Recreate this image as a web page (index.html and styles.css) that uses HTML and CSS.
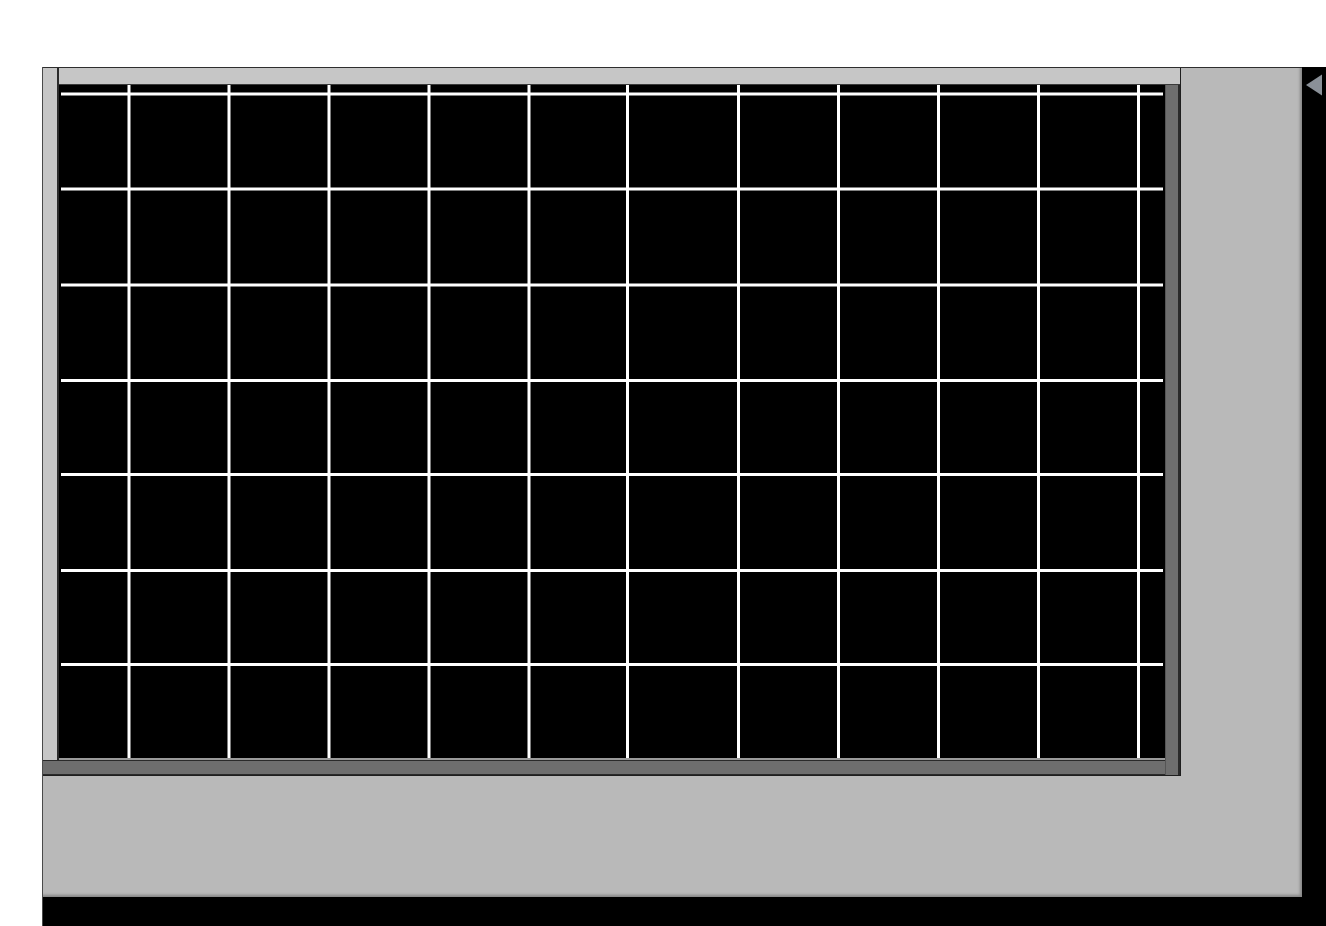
FILE: index.html
```html
<!DOCTYPE html>
<html>
<head>
<meta charset="utf-8">
<link rel="stylesheet" href="styles.css">
</head>
<body>
<div class="stage">
  <div class="screen">
    <div class="panel">
      <div class="window">
        <div class="left-strip"></div>
        <div class="top-strip"></div>
        <div class="canvas">
          <svg class="grid" width="1106" height="673" viewBox="0 0 1106 673">
            <g stroke="#ffffff" stroke-width="3">
              <line x1="70" y1="0" x2="70" y2="673"/>
              <line x1="170" y1="0" x2="170" y2="673"/>
              <line x1="270" y1="0" x2="270" y2="673"/>
              <line x1="370" y1="0" x2="370" y2="673"/>
              <line x1="470" y1="0" x2="470" y2="673"/>
              <line x1="568.5" y1="0" x2="568.5" y2="673"/>
              <line x1="679.5" y1="0" x2="679.5" y2="673"/>
              <line x1="779.5" y1="0" x2="779.5" y2="673"/>
              <line x1="879.5" y1="0" x2="879.5" y2="673"/>
              <line x1="979.5" y1="0" x2="979.5" y2="673"/>
              <line x1="1079.5" y1="0" x2="1079.5" y2="673"/>
            </g>
            <g stroke="#ffffff" stroke-width="3">
              <line x1="2" y1="9" x2="1104" y2="9"/>
              <line x1="2" y1="104" x2="1104" y2="104"/>
              <line x1="2" y1="200" x2="1104" y2="200"/>
              <line x1="2" y1="295.5" x2="1104" y2="295.5"/>
              <line x1="2" y1="389.5" x2="1104" y2="389.5"/>
              <line x1="2" y1="485.5" x2="1104" y2="485.5"/>
              <line x1="2" y1="579.5" x2="1104" y2="579.5"/>
            </g>
          </svg>
        </div>
        <div class="vscroll"></div>
        <div class="hbar"></div>
      </div>
    </div>
    <div class="side">
      <svg class="arrow" width="17" height="22" viewBox="0 0 17 22">
        <polygon points="0,11 16,0.5 16,21.5" fill="#8a9098"/>
      </svg>
    </div>
  </div>
</div>
</body>
</html>
```
FILE: styles.css
```css
html, body {
  margin: 0;
  padding: 0;
  background: #ffffff;
  overflow: hidden;
}

.stage {
  padding-top: 67px;
  padding-left: 42px;
}

.screen {
  box-sizing: border-box;
  width: 1284px;
  height: 859px;
  background: #000000;
  border-left: 1px solid #4a4a4a;
  display: flex;
  align-items: flex-start;
}

.panel {
  box-sizing: border-box;
  width: 1259px;
  height: 830px;
  background: #b9b9b9;
  border-top: 1px solid #2e2e2e;
  box-shadow: inset -3px -3px 3px -1px rgba(0, 0, 0, 0.28);
}

.window {
  box-sizing: border-box;
  width: 1138px;
  height: 708px;
  border-right: 1px solid #1e1e1e;
  border-bottom: 1px solid #1e1e1e;
  display: grid;
  grid-template-columns: 16px 1106px 15px;
  grid-template-rows: 17px 675px 15px;
  grid-template-areas:
    "left top top"
    "left canvas vscroll"
    "hbar hbar vscroll";
}

.left-strip {
  grid-area: left;
  box-sizing: border-box;
  background: #c6c6c6;
  border-right: 2px solid #2a2a2a;
}

.top-strip {
  grid-area: top;
  box-sizing: border-box;
  background: #c6c6c6;
  border-bottom: 1px solid #3a3a3a;
}

.canvas {
  grid-area: canvas;
  box-sizing: border-box;
  background: #000000;
  border-bottom: 2px solid #9a9a9a;
  overflow: hidden;
}

.grid {
  display: block;
}

.vscroll {
  grid-area: vscroll;
  box-sizing: border-box;
  background: #6e6e6e;
  border-left: 1px solid #555555;
  border-right: 2px solid #2a2a2a;
}

.hbar {
  grid-area: hbar;
  box-sizing: border-box;
  background: #6e6e6e;
  border-top: 1px solid #2a2a2a;
  border-bottom: 1px solid #2a2a2a;
}

.side {
  width: 24px;
  padding-top: 7px;
  padding-left: 4px;
  box-sizing: border-box;
}

.arrow {
  display: block;
}
```
